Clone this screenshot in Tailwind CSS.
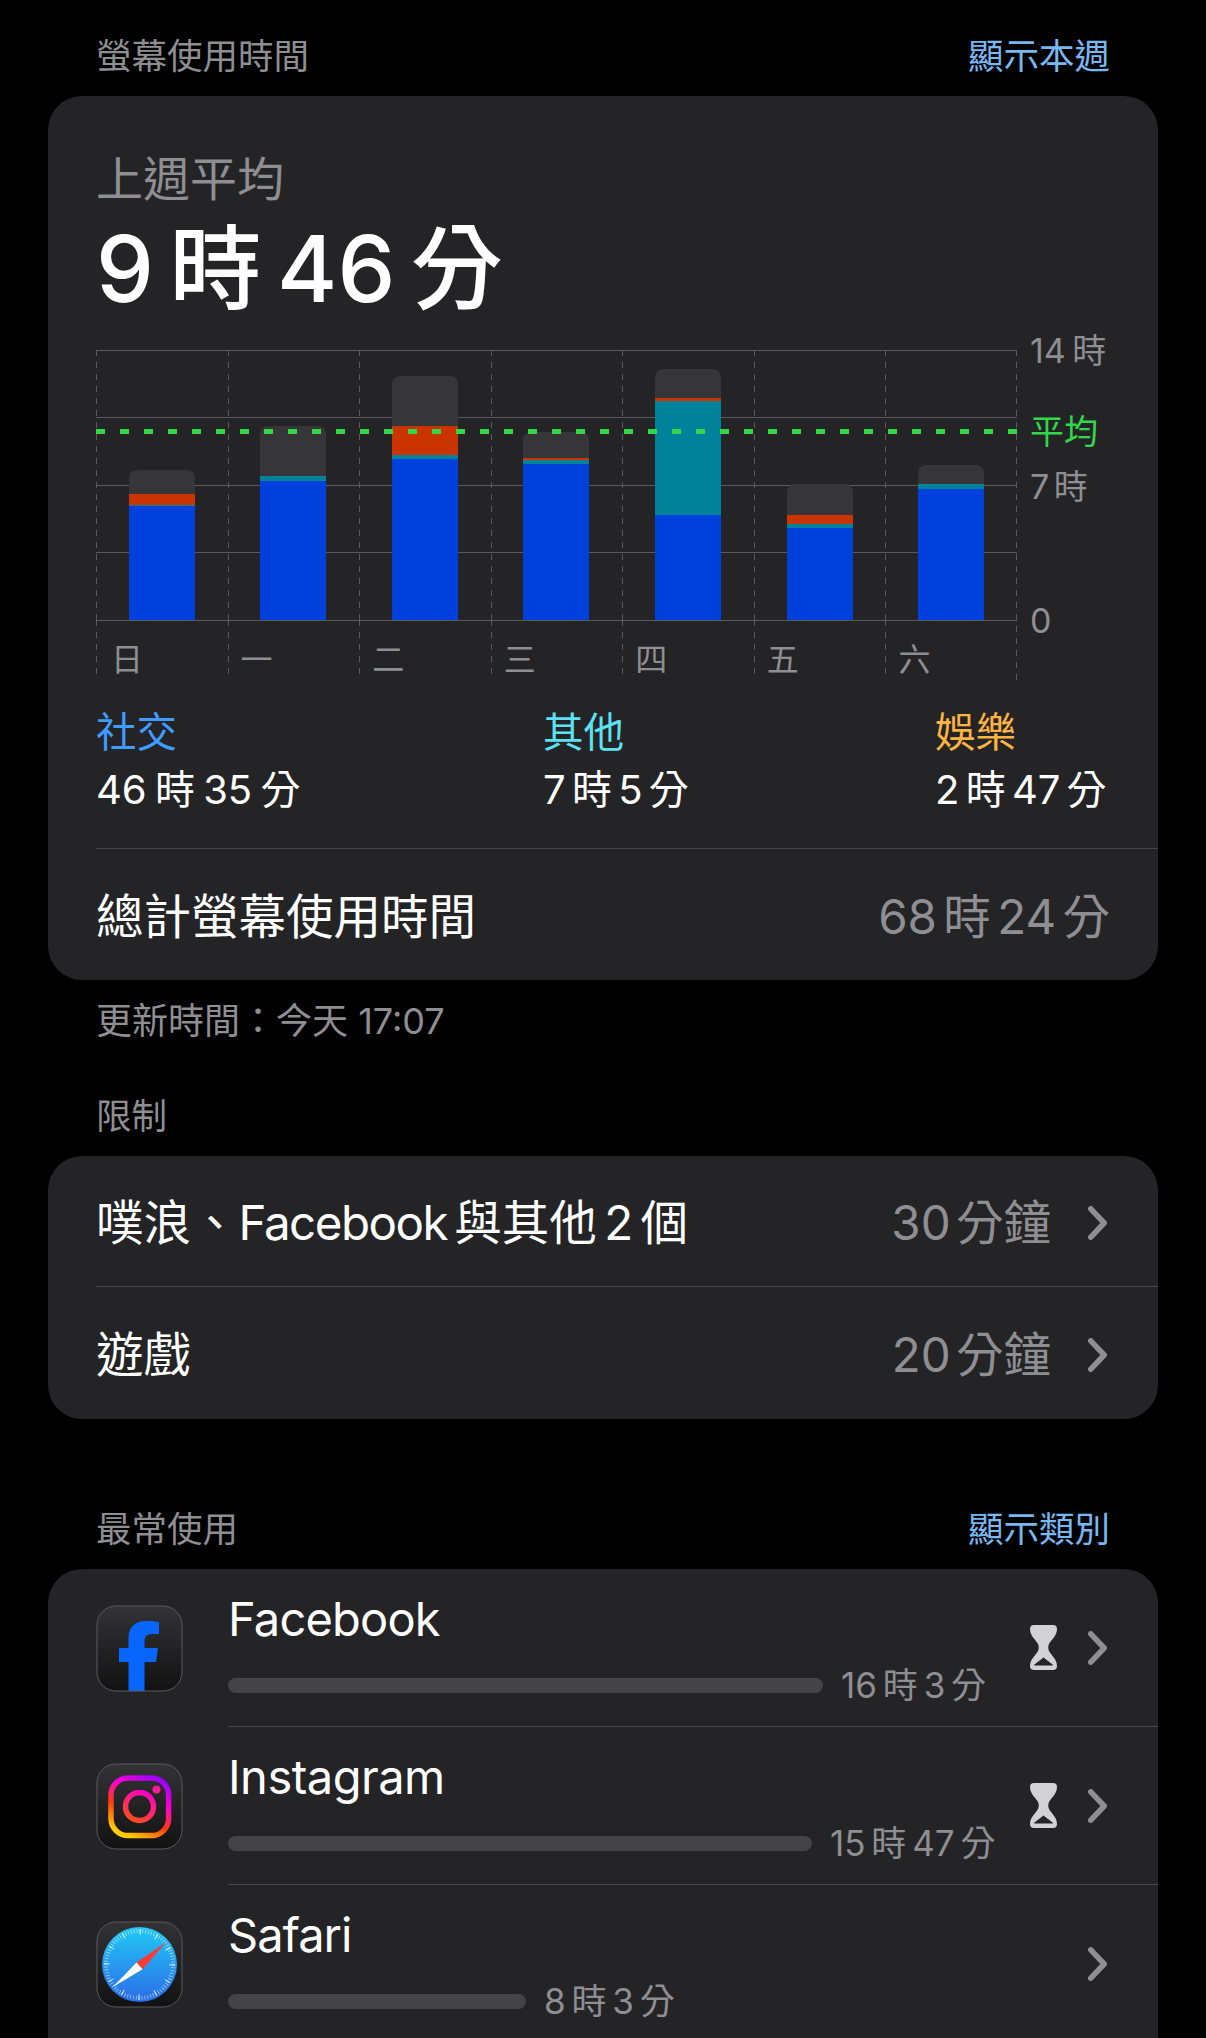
<!DOCTYPE html>
<html lang="zh-Hant">
<head>
    <meta charset="UTF-8">
    <meta name="viewport" content="width=device-width, initial-scale=1.0">
    <title>螢幕使用時間</title>
    <script src="https://cdn.jsdelivr.net/npm/@tailwindcss/browser@4"></script>
</head>
<body class="bg-black text-white font-['Inter','Noto_Sans_CJK_TC',sans-serif] w-[1206px] h-[2038px] overflow-hidden">
    <div class="px-[48px] h-[2038px] overflow-hidden">
        <!-- Screen time header -->
        <div class="h-[96px] pl-[48px] pr-[48px] pt-[18px] flex items-center justify-between text-[35.5px]">
            <span class="text-[#8e8e93]">螢幕使用時間</span>
            <span class="text-[#78b8f2]">顯示本週</span>
        </div>

        <!-- Weekly card -->
        <div class="h-[884px] bg-[#242426] rounded-[34px] pl-[48px] flex flex-col">
            <div class="pt-[49px] h-[123px] text-[47px] leading-[68px] text-[#8e8e93]">上週平均</div>
            <div class="h-[100px] text-[92px] leading-[100px] font-medium [word-spacing:-9px]">9 時 46 分</div>

            <!-- Chart -->
            <div class="relative mt-[31px] w-[921px] h-[330px] shrink-0">
                <div class="absolute left-0 right-0 top-0 h-px bg-[#5a5a5c]"></div>
                <div class="absolute left-0 right-0 top-[67px] h-px bg-[#5a5a5c]"></div>
                <div class="absolute left-0 right-0 top-[135px] h-px bg-[#5a5a5c]"></div>
                <div class="absolute left-0 right-0 top-[202px] h-px bg-[#5a5a5c]"></div>
                <div class="absolute left-0 right-0 top-[270px] h-px bg-[#5a5a5c]"></div>
                <div class="absolute right-0 top-0 bottom-0 w-px bg-[repeating-linear-gradient(180deg,#5a5a5c_0,#5a5a5c_6px,transparent_6px,transparent_12px)]"></div>

                <div class="absolute inset-0 grid grid-cols-7 grid-rows-[270px_60px]">
                    <div class="flex flex-col justify-end items-center bg-[repeating-linear-gradient(180deg,#5a5a5c_0,#5a5a5c_6px,transparent_6px,transparent_12px)] bg-[length:1px_100%] bg-no-repeat">
                        <div class="w-[66px] h-[24px] bg-[#363638] rounded-t-[8px]"></div>
                        <div class="w-[66px] h-[11px] bg-[#c93400]"></div>
                        <div class="w-[66px] h-[1px] bg-[#00829b]"></div>
                        <div class="w-[66px] h-[114px] bg-[#0040dd]"></div>
                    </div>
                    <div class="flex flex-col justify-end items-center bg-[repeating-linear-gradient(180deg,#5a5a5c_0,#5a5a5c_6px,transparent_6px,transparent_12px)] bg-[length:1px_100%] bg-no-repeat">
                        <div class="w-[66px] h-[50px] bg-[#363638] rounded-t-[8px]"></div>
                        <div class="w-[66px] h-[5px] bg-[#00829b]"></div>
                        <div class="w-[66px] h-[139px] bg-[#0040dd]"></div>
                    </div>
                    <div class="flex flex-col justify-end items-center bg-[repeating-linear-gradient(180deg,#5a5a5c_0,#5a5a5c_6px,transparent_6px,transparent_12px)] bg-[length:1px_100%] bg-no-repeat">
                        <div class="w-[66px] h-[50px] bg-[#363638] rounded-t-[8px]"></div>
                        <div class="w-[66px] h-[29px] bg-[#c93400]"></div>
                        <div class="w-[66px] h-[4px] bg-[#00829b]"></div>
                        <div class="w-[66px] h-[161px] bg-[#0040dd]"></div>
                    </div>
                    <div class="flex flex-col justify-end items-center bg-[repeating-linear-gradient(180deg,#5a5a5c_0,#5a5a5c_6px,transparent_6px,transparent_12px)] bg-[length:1px_100%] bg-no-repeat">
                        <div class="w-[66px] h-[26px] bg-[#363638] rounded-t-[8px]"></div>
                        <div class="w-[66px] h-[2px] bg-[#c93400]"></div>
                        <div class="w-[66px] h-[4px] bg-[#00829b]"></div>
                        <div class="w-[66px] h-[156px] bg-[#0040dd]"></div>
                    </div>
                    <div class="flex flex-col justify-end items-center bg-[repeating-linear-gradient(180deg,#5a5a5c_0,#5a5a5c_6px,transparent_6px,transparent_12px)] bg-[length:1px_100%] bg-no-repeat">
                        <div class="w-[66px] h-[29px] bg-[#363638] rounded-t-[8px]"></div>
                        <div class="w-[66px] h-[3px] bg-[#c93400]"></div>
                        <div class="w-[66px] h-[114px] bg-[#00829b]"></div>
                        <div class="w-[66px] h-[105px] bg-[#0040dd]"></div>
                    </div>
                    <div class="flex flex-col justify-end items-center bg-[repeating-linear-gradient(180deg,#5a5a5c_0,#5a5a5c_6px,transparent_6px,transparent_12px)] bg-[length:1px_100%] bg-no-repeat">
                        <div class="w-[66px] h-[31px] bg-[#363638] rounded-t-[8px]"></div>
                        <div class="w-[66px] h-[9px] bg-[#c93400]"></div>
                        <div class="w-[66px] h-[4px] bg-[#00829b]"></div>
                        <div class="w-[66px] h-[92px] bg-[#0040dd]"></div>
                    </div>
                    <div class="flex flex-col justify-end items-center bg-[repeating-linear-gradient(180deg,#5a5a5c_0,#5a5a5c_6px,transparent_6px,transparent_12px)] bg-[length:1px_100%] bg-no-repeat">
                        <div class="w-[66px] h-[19px] bg-[#363638] rounded-t-[8px]"></div>
                        <div class="w-[66px] h-[5px] bg-[#00829b]"></div>
                        <div class="w-[66px] h-[131px] bg-[#0040dd]"></div>
                    </div>

                    <div class="pl-[15px] pt-[18px] text-[32px] leading-[44px] text-[#8e8e93] bg-[repeating-linear-gradient(180deg,#5a5a5c_0,#5a5a5c_6px,transparent_6px,transparent_12px)] bg-[length:1px_100%] bg-no-repeat">日</div>
                    <div class="pl-[13px] pt-[18px] text-[32px] leading-[44px] text-[#8e8e93] bg-[repeating-linear-gradient(180deg,#5a5a5c_0,#5a5a5c_6px,transparent_6px,transparent_12px)] bg-[length:1px_100%] bg-no-repeat">一</div>
                    <div class="pl-[13px] pt-[18px] text-[32px] leading-[44px] text-[#8e8e93] bg-[repeating-linear-gradient(180deg,#5a5a5c_0,#5a5a5c_6px,transparent_6px,transparent_12px)] bg-[length:1px_100%] bg-no-repeat">二</div>
                    <div class="pl-[13px] pt-[18px] text-[32px] leading-[44px] text-[#8e8e93] bg-[repeating-linear-gradient(180deg,#5a5a5c_0,#5a5a5c_6px,transparent_6px,transparent_12px)] bg-[length:1px_100%] bg-no-repeat">三</div>
                    <div class="pl-[13px] pt-[18px] text-[32px] leading-[44px] text-[#8e8e93] bg-[repeating-linear-gradient(180deg,#5a5a5c_0,#5a5a5c_6px,transparent_6px,transparent_12px)] bg-[length:1px_100%] bg-no-repeat">四</div>
                    <div class="pl-[13px] pt-[18px] text-[32px] leading-[44px] text-[#8e8e93] bg-[repeating-linear-gradient(180deg,#5a5a5c_0,#5a5a5c_6px,transparent_6px,transparent_12px)] bg-[length:1px_100%] bg-no-repeat">五</div>
                    <div class="pl-[13px] pt-[18px] text-[32px] leading-[44px] text-[#8e8e93] bg-[repeating-linear-gradient(180deg,#5a5a5c_0,#5a5a5c_6px,transparent_6px,transparent_12px)] bg-[length:1px_100%] bg-no-repeat">六</div>
                </div>

                <!-- Average line -->
                <div class="absolute left-0 right-0 top-[79px] h-[5px] bg-[repeating-linear-gradient(90deg,#32d74b_0,#32d74b_9px,transparent_9px,transparent_24px)]"></div>

                <!-- Axis labels -->
                <span class="absolute left-[934px] top-[-21px] text-[34px] leading-[44px] whitespace-nowrap text-[#8e8e93] [word-spacing:-3px]">14 時</span>
                <span class="absolute left-[934px] top-[60px] text-[34px] leading-[44px] whitespace-nowrap text-[#32d74b]">平均</span>
                <span class="absolute left-[934px] top-[115px] text-[34px] leading-[44px] whitespace-nowrap text-[#8e8e93] [word-spacing:-5px]">7 時</span>
                <span class="absolute left-[934px] top-[249px] text-[34px] leading-[44px] whitespace-nowrap text-[#8e8e93]">0</span>
            </div>

            <!-- Category totals -->
            <div class="mt-[27px] h-[141px] shrink-0 flex">
                <div class="w-[447px] flex flex-col">
                    <span class="text-[40.5px] leading-[52px] text-[#409cff]">社交</span>
                    <span class="text-[40px] leading-[52px] mt-[5px] [word-spacing:-3px]">46 時 35 分</span>
                </div>
                <div class="w-[392px] flex flex-col">
                    <span class="text-[40.5px] leading-[52px] text-[#5ce1f2]">其他</span>
                    <span class="text-[40px] leading-[52px] mt-[5px] [word-spacing:-5px]">7 時 5 分</span>
                </div>
                <div class="flex flex-col">
                    <span class="text-[40.5px] leading-[52px] text-[#ffb340]">娛樂</span>
                    <span class="text-[40px] leading-[52px] mt-[5px] whitespace-nowrap [word-spacing:-5px]">2 時 47 分</span>
                </div>
            </div>

            <div class="h-px bg-[#48484a] shrink-0"></div>
            <div class="flex-1 pr-[48px] pt-[5px] flex items-center justify-between text-[47.5px]">
                <span>總計螢幕使用時間</span>
                <span class="text-[#8e8e93] [word-spacing:-7px]">68 時 24 分</span>
            </div>
        </div>

        <div class="h-[176px] pl-[48px] pt-[18px]">
            <div class="text-[36px] leading-[46px] text-[#8e8e93]">更新時間：今天 17:07</div>
            <div class="mt-[50px] text-[35.5px] leading-[46px] text-[#8e8e93]">限制</div>
        </div>

        <!-- Limits card -->
        <div class="h-[263px] bg-[#242426] rounded-[34px] pl-[48px] flex flex-col">
            <div class="h-[130px] pt-[4px] pr-[51px] flex items-center justify-between text-[47.5px]">
                <span class="[word-spacing:-6px]">噗浪、<span class="tracking-[-1.5px]">Facebook</span> 與其他 2 個</span>
                <div class="flex items-center gap-[37px]">
                    <span class="text-[#8e8e93] [word-spacing:-8px]">30 分鐘</span>
                    <svg class="w-[19px] h-[34px]" viewBox="0 0 19 34" fill="none" stroke="#8e8e93" stroke-width="5.5" stroke-linecap="round" stroke-linejoin="round"><path d="M2.8 2.8 16.2 17 2.8 31.2"/></svg>
                </div>
            </div>
            <div class="h-px bg-[#48484a] shrink-0"></div>
            <div class="flex-1 pt-[4px] pr-[51px] flex items-center justify-between text-[47.5px]">
                <span>遊戲</span>
                <div class="flex items-center gap-[37px]">
                    <span class="text-[#8e8e93] [word-spacing:-8px]">20 分鐘</span>
                    <svg class="w-[19px] h-[34px]" viewBox="0 0 19 34" fill="none" stroke="#8e8e93" stroke-width="5.5" stroke-linecap="round" stroke-linejoin="round"><path d="M2.8 2.8 16.2 17 2.8 31.2"/></svg>
                </div>
            </div>
        </div>

        <div class="h-[150px] pl-[48px] pr-[48px] pb-[16px] flex items-end justify-between text-[35.5px] leading-[46px]">
            <span class="text-[#8e8e93]">最常使用</span>
            <span class="text-[#78b8f2]">顯示類別</span>
        </div>

        <!-- Most used -->
        <div class="bg-[#242426] rounded-t-[34px] pl-[48px] h-[500px]">
            <!-- Facebook -->
            <div class="h-[158px] flex items-center">
                <svg class="w-[87px] h-[87px] shrink-0" viewBox="0 0 87 87">
                    <defs>
                        <linearGradient id="tile" x1="0" y1="0" x2="0" y2="1"><stop offset="0" stop-color="#333335"/><stop offset="1" stop-color="#121213"/></linearGradient>
                        <clipPath id="tileClip"><rect x="1" y="1" width="85" height="85" rx="19"/></clipPath>
                    </defs>
                    <rect x="1" y="1" width="85" height="85" rx="19" fill="url(#tile)"/>
                    <path clip-path="url(#tileClip)" d="M32.5 87V57H23V43H32.5V33C32.5 22 39 16 50 16C55 16 59 16.5 63 17V29H56C50.5 29 48.5 32 48.5 36V43H62L60 57H48.5V87Z" fill="#0866ff"/>
                    <rect x="1" y="1" width="85" height="85" rx="19" fill="none" stroke="#5a5a5c" stroke-width="1"/>
                </svg>
                <div class="ml-[45px] flex-1 h-full border-b border-[#48484a] flex items-center">
                    <div class="flex-1 h-full">
                        <div class="pt-[20px] text-[47px] leading-[60px] tracking-[-0.8px]">Facebook</div>
                        <div class="mt-[14px] h-[44px] flex items-center">
                            <div class="w-[595px] h-[15px] rounded-full bg-[#444446]"></div>
                            <span class="ml-[18px] text-[35px] leading-[44px] whitespace-nowrap text-[#8e8e93] [word-spacing:-4px]">16 時 3 分</span>
                        </div>
                    </div>
                    <div class="pr-[51px] flex items-center gap-[31px]">
                        <svg class="w-[27px] h-[45px]" viewBox="0 0 27 45"><path d="M4 0H23Q27 0 27 4C27 11 21 15 19 19C18 21 18 24 19 26C21 30 27 34 27 41Q27 45 23 45H4Q0 45 0 41C0 34 6 30 8 26C9 24 9 21 8 19C6 15 0 11 0 4Q0 0 4 0Z" fill="#d1d1d6"/><path d="M13.5 33L22.5 40H4.5Z" fill="#242426" stroke="#242426" stroke-linejoin="round"/></svg>
                        <svg class="w-[19px] h-[34px]" viewBox="0 0 19 34" fill="none" stroke="#8e8e93" stroke-width="5.5" stroke-linecap="round" stroke-linejoin="round"><path d="M2.8 2.8 16.2 17 2.8 31.2"/></svg>
                    </div>
                </div>
            </div>

            <!-- Instagram -->
            <div class="h-[158px] flex items-center">
                <svg class="w-[87px] h-[87px] shrink-0" viewBox="0 0 87 87">
                    <defs>
                        <linearGradient id="insta" x1="0.8" y1="0" x2="0.3" y2="1"><stop offset="0" stop-color="#9d00ff"/><stop offset="0.35" stop-color="#ff00c8"/><stop offset="0.65" stop-color="#ff3a10"/><stop offset="1" stop-color="#ffcc00"/></linearGradient>
                        <linearGradient id="instaRing" x1="0.8" y1="0" x2="0.3" y2="1"><stop offset="0" stop-color="#ff00c8"/><stop offset="1" stop-color="#ff4a20"/></linearGradient>
                    </defs>
                    <rect x="1" y="1" width="85" height="85" rx="19" fill="url(#tile)" stroke="#5a5a5c" stroke-width="1"/>
                    <rect x="15" y="15" width="57.6" height="57.6" rx="17" fill="none" stroke="url(#insta)" stroke-width="5.5"/>
                    <circle cx="43.5" cy="43.5" r="14" fill="none" stroke="url(#instaRing)" stroke-width="5.5"/>
                    <circle cx="60.5" cy="26.5" r="4" fill="#ff1a9c"/>
                </svg>
                <div class="ml-[45px] flex-1 h-full border-b border-[#48484a] flex items-center">
                    <div class="flex-1 h-full">
                        <div class="pt-[20px] text-[47px] leading-[60px] tracking-[-0.5px]">Instagram</div>
                        <div class="mt-[14px] h-[44px] flex items-center">
                            <div class="w-[584px] h-[15px] rounded-full bg-[#444446]"></div>
                            <span class="ml-[18px] text-[35px] leading-[44px] whitespace-nowrap text-[#8e8e93] [word-spacing:-4px]">15 時 47 分</span>
                        </div>
                    </div>
                    <div class="pr-[51px] flex items-center gap-[31px]">
                        <svg class="w-[27px] h-[45px]" viewBox="0 0 27 45"><path d="M4 0H23Q27 0 27 4C27 11 21 15 19 19C18 21 18 24 19 26C21 30 27 34 27 41Q27 45 23 45H4Q0 45 0 41C0 34 6 30 8 26C9 24 9 21 8 19C6 15 0 11 0 4Q0 0 4 0Z" fill="#d1d1d6"/><path d="M13.5 33L22.5 40H4.5Z" fill="#242426" stroke="#242426" stroke-linejoin="round"/></svg>
                        <svg class="w-[19px] h-[34px]" viewBox="0 0 19 34" fill="none" stroke="#8e8e93" stroke-width="5.5" stroke-linecap="round" stroke-linejoin="round"><path d="M2.8 2.8 16.2 17 2.8 31.2"/></svg>
                    </div>
                </div>
            </div>

            <!-- Safari -->
            <div class="h-[158px] flex items-center">
                <svg class="w-[87px] h-[87px] shrink-0" viewBox="0 0 87 87">
                    <defs>
                        <linearGradient id="safari" x1="0" y1="0" x2="0" y2="1"><stop offset="0" stop-color="#22c8f5"/><stop offset="1" stop-color="#2a6ce8"/></linearGradient>
                    </defs>
                    <rect x="1" y="1" width="85" height="85" rx="19" fill="url(#tile)" stroke="#5a5a5c" stroke-width="1"/>
                    <circle cx="43.5" cy="43.5" r="37.5" fill="url(#safari)"/>
                    <circle cx="43.5" cy="43.5" r="33.5" fill="none" stroke="#ffffff" stroke-opacity="0.65" stroke-width="4" stroke-dasharray="0.7 2.22"/>
                    <circle cx="43.5" cy="43.5" r="32.5" fill="none" stroke="#ffffff" stroke-opacity="0.85" stroke-width="6" stroke-dasharray="0.9 16.12"/>
                    <path d="M69.8 21.5 40.5 41.5 46.5 48.2Z" fill="#ff3b30"/>
                    <path d="M16.5 66.2 40.5 41.5 46.5 48.2Z" fill="#ffffff"/>
                </svg>
                <div class="ml-[45px] flex-1 h-full flex items-center">
                    <div class="flex-1 h-full">
                        <div class="pt-[20px] text-[47px] leading-[60px] tracking-[-1px]">Safari</div>
                        <div class="mt-[14px] h-[44px] flex items-center">
                            <div class="w-[298px] h-[15px] rounded-full bg-[#444446]"></div>
                            <span class="ml-[18px] text-[35px] leading-[44px] whitespace-nowrap text-[#8e8e93] [word-spacing:-4px]">8 時 3 分</span>
                        </div>
                    </div>
                    <div class="pr-[51px]">
                        <svg class="w-[19px] h-[34px]" viewBox="0 0 19 34" fill="none" stroke="#8e8e93" stroke-width="5.5" stroke-linecap="round" stroke-linejoin="round"><path d="M2.8 2.8 16.2 17 2.8 31.2"/></svg>
                    </div>
                </div>
            </div>
        </div>
    </div>
</body>
</html>
